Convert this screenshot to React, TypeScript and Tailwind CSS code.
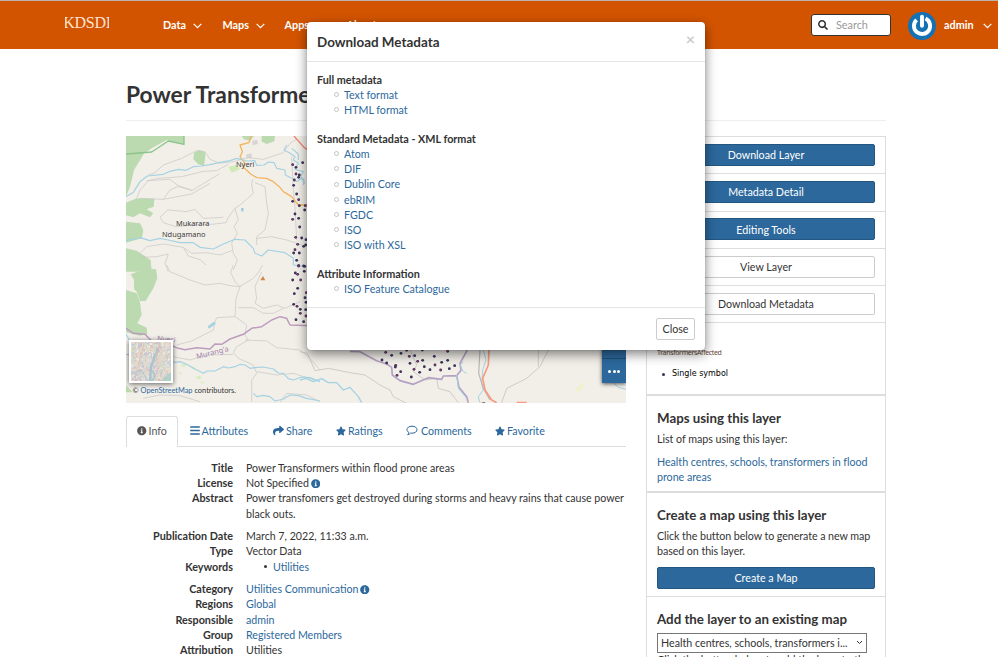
import type { ReactNode } from "react";
import { FaBars, FaInfoCircle, FaSearch, FaShare, FaStar } from "react-icons/fa";

const link = "text-[#2c689c]";

function Chevron({ className = "" }: { className?: string }) {
  return (
    <svg viewBox="0 0 9 6" className={`h-[6px] w-[9px] shrink-0 ${className}`} fill="none" stroke="#fff" strokeWidth="1.2">
      <path d="M0.7 0.9 L4.5 4.7 L8.3 0.9" />
    </svg>
  );
}

function CommentIcon() {
  return (
    <svg viewBox="0 0 12 11" className="mr-[3px] h-[11px] w-[12px]" fill="none" stroke="#2c689c" strokeWidth="1">
      <path d="M6 1.2C3.1 1.2 1 2.7 1 4.7c0 1.2.7 2.1 1.8 2.7C2.7 8.500 2.300 9 1.700 9.700c1.300-.2 2.300-.8 3-1.600.4.1.8.1 1.300.1 2.900 0 5-1.500 5-3.500s-2.100-3.500-5-3.500z" />
    </svg>
  );
}

function Header() {
  return (
    <header className="flex h-[49px] items-start border-t border-[#bdb3ad] bg-[#d35400] text-[10.850px] font-bold text-white">
      <div className="ml-[65px] mt-[14px] flex h-[16px] w-[44px] justify-center overflow-hidden font-['Liberation_Serif',serif] text-[16px] leading-[16px] font-normal tracking-[-0.300px] text-[#fbe3d3]">
        <span className="shrink-0">KDSDI</span>
      </div>
      <nav className="mt-[16px] ml-[54px] flex w-[300px] leading-[16px]">
        <span className="flex w-[59.500px] items-center">Data<Chevron className="ml-[7px] mt-[2px]" /></span>
        <span className="flex w-[62px] items-center">Maps<Chevron className="ml-[7px] mt-[2px]" /></span>
        <span className="flex w-[62px] items-center">Apps<Chevron className="ml-[7px] mt-[2px]" /></span>
        <span className="flex items-center">About<Chevron className="ml-[7px] mt-[2px]" /></span>
      </nav>
      <div className="mt-[13px] ml-[348px] flex h-[22px] w-[80px] items-center rounded-[3px] border border-[#333] bg-white pl-[6px] font-normal text-[#999]">
        <FaSearch className="h-[10px] w-[10px] text-[#333]" />
        <span className="ml-[8px]">Search</span>
      </div>
      <svg viewBox="0 0 28 28" className="mt-[11px] ml-[17px] h-[28px] w-[28px]">
        <circle cx="14" cy="14" r="14" fill="#1472b4" />
        <path d="M8.600 7.900a8.100 8.100 0 1 0 8.900-1.300" fill="none" stroke="#fff" strokeWidth="3.900" />
        <path d="M14 4.600v9.200" stroke="#fff" strokeWidth="3.900" strokeLinecap="round" />
      </svg>
      <span className="mt-[16px] ml-[8px] flex items-center font-bold leading-[16px]">admin<Chevron className="ml-[9.500px] mt-[2px]" /></span>
    </header>
  );
}

/* Transformer locations, grouped by map tile. */
const northDots = [518,104,548,98,528,112,528,132,538,135,536,142,523,150,521,166,530,192,536,209,518,214,538,227,556,227,554,240,525,252,518,268,536,265,539,291,527,322,545,324,558,329,533,343,551,349,557,345,525,359,521,369,530,391,536,407,554,409,538,369];
const westDots = [536,3,551,3,526,24,533,28,553,19,518,45,542,45,533,70,523,86,559,83,555,98,521,118,531,124,541,133,558,112,541,145,557,134,528,164,558,153,551,170];
const southDots = [257,127,275,136,303,130,328,139,344,137,403,139,443,124,246,150,260,159,287,166,286,171,302,185,291,196,334,201,330,160,353,154,368,151,373,170,342,178,359,187,390,179,405,165,425,157,443,151,422,180,448,176,464,167,320,121,367,120];

function Dots({ points }: { points: number[] }) {
  const items: ReactNode[] = [];
  for (let i = 0; i < points.length; i += 2) {
    items.push(
      <g key={i}>
        <circle cx={points[i]} cy={points[i + 1]} r="4.200" fill="#34325c" />
        <circle cx={points[i]} cy={points[i + 1]} r="2.300" fill={i % 6 === 0 ? "#b8305c" : "#4b3355"} />
      </g>
    );
  }
  return <>{items}</>;
}

function MiniMap() {
  const colors = ["#e6cfc6", "#c9dbc0", "#ead9c6", "#c7c3d6", "#efeae3", "#e2bfbc", "#b9cfdd", "#d3d6cc"];
  const cells: ReactNode[] = [];
  let seed = 7;
  const next = (limit: number) => {
    seed = (seed * 1103515245 + 12345) % 2147483648;
    return Math.floor((seed / 2147483648) * limit);
  };
  for (let i = 0; i < 700; i++) {
    cells.push(<rect key={i} x={next(40)} y={next(38)} width={1 + next(2)} height={1 + next(2)} fill={colors[next(8)]} />);
  }
  return (
    <svg viewBox="0 0 40 38" preserveAspectRatio="none" className="block h-full w-full">
      <rect width="40" height="38" fill="#dedbd3" />
      {cells}
      <g fill="none" opacity="0.75">
        <path d="M27 6L24 14L20 24L19 38" stroke="#98bfd8" strokeWidth="2.500" />
        <path d="M30 38L35 33L40 30V38Z" fill="#a3cfc9" />
        <path d="M22 28L24 34L21 38" stroke="#9cc3c8" strokeWidth="2" />
        <path d="M24 13L29 9M29 0L25 18M13 2L6 26" stroke="#eeb994" strokeWidth="0.800" />
        <path d="M0 31L10 27L17 38" stroke="#a4bed6" strokeWidth="1" />
      </g>
    </svg>
  );
}

function LayerMap() {
  return (
    <div className="relative h-[267px] w-[500px] overflow-hidden bg-[#f2efe9]">
      <svg viewBox="0 0 500 267" className="block h-[267px] w-[500px]" fill="none" strokeLinejoin="round">
        <g transform="translate(-6 -6) scale(.33333)">
          <g fill="#bcdab0">
            <path d="M18 18H192V43L158 35L140 30L95 55L72 70L62 88L42 120L30 170L18 200Z" />
            <path d="M222 68L238 60L257 68L252 108L235 103L220 88Z" />
            <path d="M365 18H402L390 32L372 28ZM425 18H465L463 34L440 42L425 35Z" />
            <path d="M18 218L50 205L103 206L101 230L80 238L100 250L90 262L60 250L40 262L18 256Z" />
            <path d="M18 275L60 280L70 300L66 325L18 338Z" />
            <path d="M18 355L50 362L92 390L95 425H18Z" />
          </g>
          <path d="M18 72L95 66L145 33L192 43V18" stroke="#8cc48a" strokeWidth="4" />
          <path d="M325 110L350 105L360 118L335 128ZM345 112L350 125L330 118" fill="#cfeab4" />
          <path d="M378 74L394 70L396 84L380 84ZM396 32L412 30L414 42L398 46Z" fill="#d8d5d6" />
          <g stroke="#c6c4c2" strokeWidth="2">
            <path d="M85 135L105 128L130 105L185 85L230 62L255 65L270 88L300 100L340 95L385 83L430 88L490 68L510 40L530 28" />
            <path d="M50 205L60 180L85 152L115 145L185 140L250 124L290 122L325 103M80 152L150 148L178 170L215 180M130 208L150 180L178 168L215 182L260 155L298 132M60 205L130 208L215 192L270 160" />
            <path d="M398 148L395 165L400 190L360 225L345 235L325 262L318 278L275 283M145 240L200 245L225 238L250 265L310 262M145 238L120 262L130 278L168 290L220 285L275 283" />
            <path d="M405 158L435 170L440 220L445 250L435 300L410 320L410 345M345 235L355 270L342 290L352 310L335 340L340 370L352 390L340 420M410 325L455 320L500 330L545 345M515 80L520 180L525 230L530 330" />
            <path d="M58 372L80 350L130 342L190 352L215 370L260 368L300 375L335 362M58 374L65 382L110 380L145 372L135 400L145 425M190 352L205 378L242 390L258 405" />
          </g>
          <g stroke="#f5b45f" strokeWidth="4">
            <path d="M393 18L387 38L360 45L367 65L360 80L375 100L370 112L392 132L410 143L440 145L460 155L478 170L490 185L515 200L535 225H570" />
          </g>
          <path d="M522 18L550 50L570 65" stroke="#f08070" strokeWidth="4" />
          <g stroke="#a4d2e2" strokeWidth="3.500">
            <path d="M18 200L40 187L60 155L82 138L130 133L150 124L175 118L198 121L220 110L245 108L270 104L300 97L330 92L350 85L380 93L405 92L410 106L432 105L445 96L462 98L470 115L495 120L496 135L515 145L530 155L545 145L555 160M500 45L492 60L508 68L525 80L520 90L535 100L525 118L550 125L542 140L552 150L550 165M515 55L535 72L535 90" />
            <path d="M18 332L60 323L90 332L120 325L145 330L180 338L220 338L240 352L280 357L310 342L345 328L375 330L400 355L405 370L425 378L445 360L495 368L520 385L520 405L560 410" />
            <path d="M367 234V244" stroke="#8ac6db" strokeWidth="6" />
          </g>
          <Dots points={northDots} />
        </g>
        <g transform="translate(-6 129) scale(.33333)">
          <g fill="#bcdab0">
            <path d="M32 28L75 12L108 12L112 40L100 70L77 108H60L50 80L42 72L42 45Z" />
            <path d="M18 75L50 85L60 112L65 150L52 175L80 188L82 208L60 212L18 202Z" />
            <path d="M18 360L38 382H18Z" />
            <path d="M180 300l14-4 5 7-12 4zM210 305l15 2-4 8zM225 335l15-3 6 7-9 5zM175 320l12 5-5 6zM240 350l14 2-4 5z" fill="#d9edc4" />
          </g>
          <g stroke="#c6c4c2" strokeWidth="2">
            <path d="M140 0L150 20L210 45L255 60L300 55L330 62L358 65M340 0L332 22L345 50L360 65L348 100L345 155L380 180L375 210L385 225L350 245L340 262L355 280L400 300L410 325L395 345L395 410" />
            <path d="M358 65L400 40L418 18L428 0M425 20L405 65L410 100L405 115L430 130L470 120L495 130L540 110M345 155L290 158L285 170L280 195L215 228L170 240M355 128H400L430 145L460 145L490 130M375 225L440 228L470 248L540 255L570 280L600 315" />
            <path d="M160 275L210 285L260 270L340 268M70 400L120 390L180 392L240 410M410 320L470 330L520 325L600 350M480 412L500 385L560 390L600 410" />
          </g>
          <path d="M18 190L40 205L75 208L95 228L130 232L175 250L195 254L230 248L270 252L285 237L305 238L330 222L370 208L395 190L425 185L455 165L480 155L500 160L510 180L570 182L620 190" stroke="#bd9dbe" strokeWidth="4.500" />
          <g stroke="#a4d2e2" strokeWidth="3.500">
            <path d="M18 208L35 235M18 268L60 275L130 280L165 292L180 290L200 298L225 312L250 325L262 318L285 318L310 305L325 309L345 305L360 298L375 300L390 310L405 308L430 306L460 312L475 324L490 325L505 341L520 345L545 336L570 338L600 350M400 385L410 395L430 391L450 395L465 408L490 402L510 390L535 392L560 400L600 408" />
            <path d="M265 188L285 173" strokeWidth="8" />
          </g>
          <path d="M421 46H436L429 33Z" fill="#d58742" />
          <Dots points={westDots} />
        </g>
        <g transform="translate(174 174) scale(.33333)">
          <g stroke="#c6c4c2" strokeWidth="2.500">
            <path d="M0 125L22 130L45 182L85 175L150 188L195 195L240 225L270 240L280 260L320 280M330 120L350 165L340 185L375 210L410 205L415 235L450 245L475 278M745 120L720 170L680 205L620 235L605 278M715 120V170" />
          </g>
          <path d="M0 210L18 205L40 215L65 206L85 218L110 218L130 240L150 232L175 260L185 278" stroke="#a4d2e2" strokeWidth="4" />
          <path d="M150 124L180 125L230 152L260 162L275 172L277 195L300 212L340 223L385 203L425 208L430 198L470 197L483 181L480 160L502 120M470 197L477 232L500 260L505 278" stroke="#b5a0c3" strokeWidth="5" />
          <path d="M490 155L480 165L490 185L500 190M470 195L475 235L500 265M550 120L558 150L548 180L545 220L550 240L535 260L540 278M940 218L955 232L978 238" stroke="#a4d2e2" strokeWidth="3" />
          <path d="M540 120L536 190L550 235L570 270" stroke="#b7b5b2" strokeWidth="3.500" />
          <path d="M567 120L565 165L548 205L555 240L575 270L590 278M650 278H680" stroke="#f79a7e" strokeWidth="5" />
          <path d="M825 238L850 214L852 228L835 250Z" fill="#edf1cf" />
          <Dots points={southDots} />
        </g>
        <g fill="#3d3d3d" className="font-['Noto_Sans',sans-serif] text-[7.400px]" stroke="none">
          <text x="110" y="30.500">Nyeri</text>
          <text x="50" y="90">Mukarara</text>
          <text x="36" y="101">Ndugamano</text>
          <text x="355.500" y="271">Sagana</text>
          <text x="31" y="205" fill="#a183ab" transform="rotate(4 31 205)">Nyeri</text>
          <text x="71" y="223" fill="#a183ab" transform="rotate(-14 71 223)">Murang'a</text>
        </g>
      </svg>
      <div className="absolute left-[3px] top-[204px] h-[43px] w-[44px] border-2 border-white bg-white shadow-[0_1px_5px_rgba(0,0,0,0.6)]">
        <MiniMap />
      </div>
      <div className="absolute bottom-[6px] left-[6.500px] text-[7.400px] leading-[12px] whitespace-nowrap text-[#333]">
        © <span className={link}>OpenStreetMap</span> contributors.
      </div>
      <div className="absolute right-0 top-[190px] flex h-[57px] w-[24px] flex-col bg-[#2c689c] shadow-[0_1px_4px_rgba(0,0,0,0.65)]">
        <div className="h-[33px] border-b border-[#204d74]" />
        <div className="flex flex-1 items-center justify-center gap-[1.500px]">
          <i className="h-[3px] w-[3px] rounded-full bg-white" />
          <i className="h-[3px] w-[3px] rounded-full bg-white" />
          <i className="h-[3px] w-[3px] rounded-full bg-white" />
        </div>
      </div>
    </div>
  );
}

function Tabs() {
  return (
    <div className={`mt-[13px] flex h-[31px] items-center border-b border-[#ddd] text-[10.700px] ${link}`}>
      <div className="-mb-px flex h-[31px] w-[52px] items-center gap-[2px] rounded-t-[3px] border border-b-0 border-[#ddd] bg-white pb-[2px] pl-[10px] text-[#555]">
        <FaInfoCircle className="h-[9.500px] w-[9.500px]" />Info
      </div>
      <div className="ml-[12px] flex w-[83px] items-center gap-[1.500px]"><FaBars className="h-[11px] w-[10px]" />Attributes</div>
      <div className="flex w-[63px] items-center gap-[2px]"><FaShare className="h-[11px] w-[11px]" />Share</div>
      <div className="flex w-[70px] items-center gap-[2px]"><FaStar className="h-[10px] w-[10px]" />Ratings</div>
      <div className="flex w-[89px] items-center"><CommentIcon />Comments</div>
      <div className="flex items-center gap-[2px]"><FaStar className="h-[10px] w-[10px]" />Favorite</div>
    </div>
  );
}

function Row({ label, children }: { label: string; children: ReactNode }) {
  return (
    <div className="flex">
      <dt className="w-[107px] shrink-0 text-right text-[10.800px] font-bold">{label}</dt>
      <dd className="ml-[13px] w-[380px] whitespace-nowrap">{children}</dd>
    </div>
  );
}

function Details() {
  return (
    <dl className="mt-[12.900px] text-[10.640px]">
      <Row label="Title">Power Transformers within flood prone areas</Row>
      <Row label="License">Not Specified <FaInfoCircle className={`-mt-[2px] -ml-[1px] inline h-[9.500px] w-[9.500px] ${link}`} /></Row>
      <Row label="Abstract"><span className="tracking-[-0.020px]">Power transfomers get destroyed during storms and heavy rains that cause power<br />black outs.</span></Row>
      <div className="mt-[7.400px]">
        <Row label="Publication Date">March 7, 2022, 11:33 a.m.</Row>
        <Row label="Type">Vector Data</Row>
        <Row label="Keywords">
          <span className="flex items-center pl-[18px]"><i className="mr-[6px] h-[3px] w-[3px] rounded-full bg-[#333]" /><span className={link}>Utilities</span></span>
        </Row>
      </div>
      <div className="mt-[7.400px]">
        <Row label="Category"><span className={link}>Utilities Communication <FaInfoCircle className="-mt-[2px] -ml-[1px] inline h-[9.500px] w-[9.500px]" /></span></Row>
        <Row label="Regions"><span className={link}>Global</span></Row>
        <Row label="Responsible"><span className={link}>admin</span></Row>
        <Row label="Group"><span className={link}>Registered Members</span></Row>
        <Row label="Attribution">Utilities</Row>
      </div>
    </dl>
  );
}

function Action({ label, primary = false }: { label: string; primary?: boolean }) {
  return (
    <div className="h-[37.300px] border-t border-[#ddd] px-[10px] pt-[6.700px]">
      <div className={`flex h-[22px] items-center justify-center rounded-[2px] border ${primary ? "border-[#245682] bg-[#2c689c] text-white" : "border-[#ccc] bg-white text-[#333]"}`}>
        {label}
      </div>
    </div>
  );
}

function Sidebar() {
  return (
    <aside className="h-[540px] w-[240px] shrink-0 border-x border-[#ddd] whitespace-nowrap">
      <Action label="Download Layer" primary />
      <Action label="Metadata Detail" primary />
      <Action label="Editing Tools" primary />
      <Action label="View Layer" />
      <Action label="Download Metadata" />
      <div className="h-[71.500px] border-t border-[#ddd] px-[10px] pt-[24px]">
        <div className="font-['Noto_Sans',sans-serif] text-[7px] leading-[12px] tracking-[-0.350px] text-[#6b4a3a]">TransformersAffected</div>
        <div className="mt-[9px] flex items-center font-['DejaVu_Sans',sans-serif] text-[8px] leading-[12px] text-black">
          <i className="mr-[7px] ml-[5px] h-[3px] w-[3px] rounded-full bg-[#34325c]" />Single symbol
        </div>
      </div>
      <section className="h-[97px] border-t-2 border-[#ddd] px-[10px] pt-[13px]">
        <h4 className="text-[13.300px] leading-[18px] font-bold">Maps using this layer</h4>
        <p className="mt-[4px] tracking-[-0.030px]">List of maps using this layer:</p>
        <p className={`mt-[7.500px] tracking-[-0.030px] ${link}`}>Health centres, schools, transformers in flood<br />prone areas</p>
      </section>
      <section className="h-[105px] border-t-2 border-[#ddd] px-[10px] pt-[13px]">
        <h4 className="text-[13.300px] leading-[18px] font-bold">Create a map using this layer</h4>
        <p className="mt-[4.300px] tracking-[-0.070px]">Click the button below to generate a new map<br />based on this layer.</p>
        <div className="mt-[8px] flex h-[22px] items-center justify-center rounded-[2px] border border-[#245682] bg-[#2c689c] text-white">Create a Map</div>
      </section>
      <section className="border-t border-[#ddd] px-[10px] pt-[13px]">
        <h4 className="text-[13.300px] leading-[18px] font-bold">Add the layer to an existing map</h4>
        <div className="mt-[5px] flex h-[20px] w-[210px] items-center justify-between border border-[#767676] pr-[3px] pl-[3px]">
          <span>Health centres, schools, transformers i...</span>
          <svg viewBox="0 0 7 5" className="h-[5px] w-[7px]" fill="none" stroke="#333"><path d="M1 1L3.500 3.500L6 1" /></svg>
        </div>
        <p className="-mt-px">Click the button below to add the layer to the</p>
      </section>
    </aside>
  );
}

function MetaGroup({ title, items }: { title: string; items: string[] }) {
  return (
    <div>
      <div className="text-[10.800px] font-bold">{title}</div>
      {items.map((item) => (
        <div key={item} className={`flex items-center pl-[17px] ${link}`}>
          <i className="mr-[5px] h-[5px] w-[5px] rounded-full border border-[#c4c4c4]" />{item}
        </div>
      ))}
    </div>
  );
}

function Modal() {
  return (
    <div className="absolute top-[22px] left-[307px] h-[328px] w-[398px] rounded-[4px] bg-white shadow-[0_4px_12px_rgba(0,0,0,0.5),0_0_1px_rgba(0,0,0,0.4)]">
      <div className="flex h-[40px] justify-between border-b border-[#e5e5e5] px-[10px]">
        <h4 className="mt-[11px] text-[13.450px] leading-[18px] font-bold">Download Metadata</h4>
        <span className="mt-[9px] text-[16px] leading-[16px] font-bold text-[#ccc]">×</span>
      </div>
      <div className="flex h-[245px] flex-col gap-[13.600px] px-[10px] pt-[9.600px]">
        <MetaGroup title="Full metadata" items={["Text format", "HTML format"]} />
        <MetaGroup title="Standard Metadata - XML format" items={["Atom", "DIF", "Dublin Core", "ebRIM", "FGDC", "ISO", "ISO with XSL"]} />
        <MetaGroup title="Attribute Information" items={["ISO Feature Catalogue"]} />
      </div>
      <div className="flex justify-end border-t border-[#e5e5e5] px-[10px] pt-[10px]">
        <button className="h-[22px] w-[39px] rounded-[2px] border border-[#ccc] bg-white">Close</button>
      </div>
    </div>
  );
}

export default function App() {
  return (
    <div className="relative h-[657px] w-[998px] overflow-hidden bg-white font-[Lato,sans-serif] text-[10.700px] leading-[15.200px] text-[#333]">
      <Header />
      <main className="ml-[126px] w-[760px]">
        <h2 className="h-[72px] border-b border-[#eee] pt-[30px] text-[22.800px] leading-[30px] font-bold">Power Transformers</h2>
        <div className="mt-[15px] flex gap-[20px]">
          <div className="w-[500px] shrink-0">
            <LayerMap />
            <Tabs />
            <Details />
          </div>
          <Sidebar />
        </div>
      </main>
      <Modal />
    </div>
  );
}
